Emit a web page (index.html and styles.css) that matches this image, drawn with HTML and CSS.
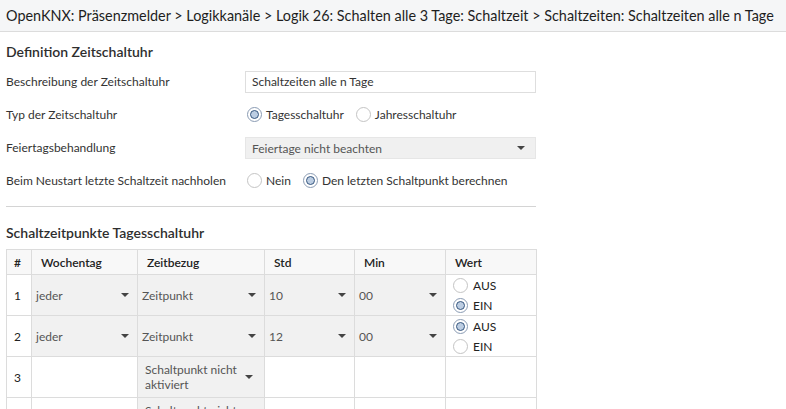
FILE: index.html
```html
<!DOCTYPE html>
<html lang="de">
<head>
<meta charset="utf-8">
<title>OpenKNX</title>
<link rel="stylesheet" href="styles.css">
</head>
<body>
<div class="crumb">OpenKNX: Präsenzmelder &gt; Logikkanäle &gt; Logik 26: Schalten alle 3 Tage: Schaltzeit &gt; Schaltzeiten: Schaltzeiten alle n Tage</div>
<div class="page">
  <h2 class="sec sec-first">Definition Zeitschaltuhr</h2>
  <div class="row">
    <div class="lbl">Beschreibung der Zeitschaltuhr</div>
    <div class="val"><div class="input">Schaltzeiten alle n Tage</div></div>
  </div>
  <div class="row">
    <div class="lbl">Typ der Zeitschaltuhr</div>
    <div class="val radios">
      <span class="opt"><span class="radio on"></span>Tagesschaltuhr</span>
      <span class="opt"><span class="radio"></span>Jahresschaltuhr</span>
    </div>
  </div>
  <div class="row">
    <div class="lbl">Feiertagsbehandlung</div>
    <div class="val"><div class="select">Feiertage nicht beachten<span class="arrow"></span></div></div>
  </div>
  <div class="row">
    <div class="lbl">Beim Neustart letzte Schaltzeit nachholen</div>
    <div class="val radios">
      <span class="opt"><span class="radio"></span>Nein</span>
      <span class="opt"><span class="radio on"></span>Den letzten Schaltpunkt berechnen</span>
    </div>
  </div>
  <hr class="sep">
  <h2 class="sec">Schaltzeitpunkte Tagesschaltuhr</h2>
  <table class="grid">
    <colgroup>
      <col class="c-n"><col class="c-w"><col class="c-z"><col class="c-s"><col class="c-m"><col class="c-v">
    </colgroup>
    <thead>
      <tr><th class="num">#</th><th>Wochentag</th><th>Zeitbezug</th><th>Std</th><th>Min</th><th>Wert</th></tr>
    </thead>
    <tbody>
      <tr>
        <td class="num">1</td>
        <td class="sel"><div class="cell-sel">jeder<span class="arrow"></span></div></td>
        <td class="sel"><div class="cell-sel">Zeitpunkt<span class="arrow"></span></div></td>
        <td class="sel"><div class="cell-sel">10<span class="arrow"></span></div></td>
        <td class="sel"><div class="cell-sel">00<span class="arrow"></span></div></td>
        <td class="wert"><div class="opt2"><span class="radio"></span>AUS</div><div class="opt2"><span class="radio on"></span>EIN</div></td>
      </tr>
      <tr>
        <td class="num">2</td>
        <td class="sel"><div class="cell-sel">jeder<span class="arrow"></span></div></td>
        <td class="sel"><div class="cell-sel">Zeitpunkt<span class="arrow"></span></div></td>
        <td class="sel"><div class="cell-sel">12<span class="arrow"></span></div></td>
        <td class="sel"><div class="cell-sel">00<span class="arrow"></span></div></td>
        <td class="wert"><div class="opt2"><span class="radio on"></span>AUS</div><div class="opt2"><span class="radio"></span>EIN</div></td>
      </tr>
      <tr>
        <td class="num">3</td>
        <td></td>
        <td class="sel"><div class="cell-sel two">Schaltpunkt nicht aktiviert<span class="arrow"></span></div></td>
        <td></td><td></td><td></td>
      </tr>
      <tr>
        <td class="num">4</td>
        <td></td>
        <td class="sel"><div class="cell-sel two">Schaltpunkt nicht aktiviert<span class="arrow"></span></div></td>
        <td></td><td></td><td></td>
      </tr>
    </tbody>
  </table>
</div>
</body>
</html>
```

FILE: styles.css
```css
* { box-sizing: border-box; }
html, body { margin: 0; padding: 0; background: #fff; }
body {
  font-family: "Lato", "Liberation Sans", sans-serif;
  font-size: 12px;
  color: #333;
  overflow: hidden;
  height: 409px;
}
.crumb {
  height: 32px;
  line-height: 31px;
  padding-left: 6px;
  background: #f5f6f7;
  border-bottom: 1px solid #dcdcdc;
  font-size: 14.4px;
  color: #1e1e1e;
  white-space: nowrap;
  overflow: hidden;
}
.page { padding: 0 6px; width: 542px; }
.sec {
  margin: 0;
  font-size: 14px;
  font-weight: 600;
  color: #2e2e2e;
  line-height: 20px;
}
.sec-first { margin-top: 10px; }
.row {
  display: flex;
  align-items: center;
  height: 33px;
}
.sec-first + .row { margin-top: 3px; }
.lbl { width: 239px; flex: none; }
.val { flex: 1; }
.input {
  height: 22px;
  line-height: 20px;
  border: 1px solid #dedede;
  padding-left: 6px;
  background: #fff;
}
.select {
  position: relative;
  height: 22px;
  line-height: 22px;
  background: #f0f0f0;
  border: 1px solid #e6e6e6;
  padding-left: 6px;
  color: #555;
}
.arrow {
  position: absolute;
  right: 10px;
  top: 50%;
  margin-top: -2px;
  width: 0; height: 0;
  border-left: 4px solid transparent;
  border-right: 4px solid transparent;
  border-top: 4px solid #444;
}
.radios { display: flex; gap: 12px; padding-left: 2px; }
.opt { display: inline-flex; align-items: center; gap: 4px; }
.radio {
  display: inline-block;
  flex: none;
  width: 15px; height: 15px;
  border-radius: 50%;
  border: 1px solid #c4c4c4;
  background: #fff;
  position: relative;
}
.radio.on { border-color: #8a9bb3; }
.radio.on::after {
  content: "";
  position: absolute;
  left: 2px; top: 2px;
  width: 9px; height: 9px;
  border-radius: 50%;
  background: #bccde2;
  border: 1.5px solid #37577f;
  box-sizing: border-box;
}
.sep {
  border: 0;
  border-top: 1px solid #d4d4d4;
  margin: 9px 0 16px 0;
  height: 0;
}
.grid {
  margin-top: 6px;
  border-collapse: collapse;
  table-layout: fixed;
  width: 530px;
}
.c-n { width: 25px; }
.c-w { width: 106px; }
.c-z { width: 127px; }
.c-s { width: 90px; }
.c-m { width: 91px; }
.c-v { width: 91px; }
.grid th, .grid td { border: 1px solid #dcdcdc; padding: 0; }
.grid th {
  height: 25px;
  text-align: left;
  font-weight: 600;
  padding-left: 9px;
  background: #f8f8f8;
  color: #222;
}
.grid th.num { padding-left: 7px; }
.grid td.num { padding-left: 7px; color: #222; }
.grid tbody tr { height: 41px; }
.grid td.sel { background: #f1f1f1; }
.cell-sel {
  position: relative;
  padding: 0 22px 0 4px;
  color: #555;
  line-height: 15px;
}
.cell-sel.two { padding-left: 7px; padding-right: 26px; }
.cell-sel .arrow { right: 8px; }
.cell-sel.two .arrow { right: 11px; }
.wert { padding-left: 7px !important; }
.opt2 { display: flex; align-items: center; gap: 5px; height: 20px; color: #222; }
```
